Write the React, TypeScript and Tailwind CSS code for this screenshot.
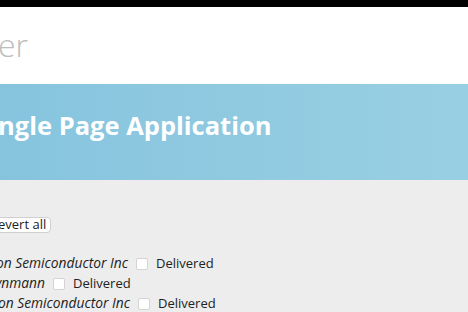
import { useState } from 'react';

const ROWS = [
  { name: 'Dixon Semiconductor Inc', shift: '-ml-[72px]' },
  { name: 'Heynmann', shift: '-ml-[155px]' },
  { name: 'Dixon Semiconductor Inc', shift: '-ml-[70px]' },
];

function Row({ name, shift }: { name: string; shift: string }) {
  const [done, setDone] = useState(false);
  return (
    <div className="flex items-center h-[20px] whitespace-nowrap">
      <span className={`italic text-[13.8px] w-[200px] shrink-0 text-right ${shift}`}>{name}</span>
      <input
        type="checkbox"
        checked={done}
        onChange={() => setDone(!done)}
        className="ml-[8px] w-[12px] h-[12px] appearance-none rounded-[2px] border border-[#d4d4d4] bg-white checked:bg-[#87c5de]"
      />
      <span className="ml-[8px]">Delivered</span>
    </div>
  );
}

export default function App() {
  return (
    <div
      className="w-[468px] h-[312px] overflow-hidden bg-[#ededed] text-[#222]"
      style={{ fontFamily: '"Open Sans", "Noto Sans", sans-serif' }}
    >
      <div className="h-[7px] bg-black" />
      <header className="h-[77px] bg-white flex items-center">
        <h1 className="text-[32px] font-light text-[#bdbdbd] -ml-[2px] pb-[2px] leading-none">er</h1>
      </header>
      <div className="h-[96px] bg-gradient-to-r from-[#86c4de] to-[#99cfe3] flex items-center">
        <h2 className="text-[25.5px] font-bold text-white -ml-[2px] leading-none pb-[12px]">ngle Page Application</h2>
      </div>
      <main className="pt-[35px] text-[13px]">
        <button className="-ml-[15px] h-[16px] px-[4px] bg-white border border-[#cfcfcf] rounded-[4px] text-[13px] leading-none text-[#222]">
          Revert all
        </button>
        <div className="mt-[19px] flex flex-col">
          {ROWS.map((r, i) => <Row key={i} {...r} />)}
        </div>
      </main>
    </div>
  );
}
